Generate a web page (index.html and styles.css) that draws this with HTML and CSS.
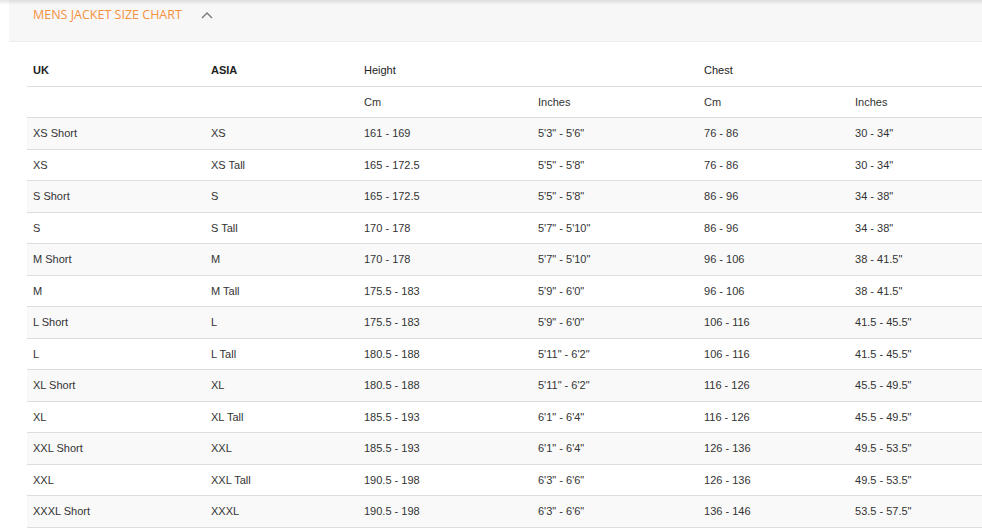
FILE: index.html
```html
<!DOCTYPE html>
<html>
<head>
<meta charset="utf-8">
<link rel="stylesheet" href="styles.css">
</head>
<body>
<div class="topshade"></div>
<div class="panel">
  <div class="panel-head">
    <span class="panel-title">MENS JACKET SIZE CHART</span>
    <svg class="chev" width="12" height="8" viewBox="0 0 12 8"><path d="M1 7 L6 2 L11 7" fill="none" stroke="#777" stroke-width="1.3"/></svg>
  </div>
  <div class="panel-body">
    <table class="chart">
      <colgroup>
        <col style="width:178px"><col style="width:153px"><col style="width:174px"><col style="width:166px"><col style="width:151px"><col>
      </colgroup>
      <thead>
        <tr class="h1"><th class="b">UK</th><th class="b">ASIA</th><th colspan="2">Height</th><th colspan="2">Chest</th></tr>
        <tr class="h2"><td></td><td></td><td>Cm</td><td>Inches</td><td>Cm</td><td>Inches</td></tr>
      </thead>
      <tbody>
        <tr><td>XS Short</td><td>XS</td><td>161 - 169</td><td>5'3" - 5'6"</td><td>76 - 86</td><td>30 - 34"</td></tr>
        <tr><td>XS</td><td>XS Tall</td><td>165 - 172.5</td><td>5'5" - 5'8"</td><td>76 - 86</td><td>30 - 34"</td></tr>
        <tr><td>S Short</td><td>S</td><td>165 - 172.5</td><td>5'5" - 5'8"</td><td>86 - 96</td><td>34 - 38"</td></tr>
        <tr><td>S</td><td>S Tall</td><td>170 - 178</td><td>5'7" - 5'10"</td><td>86 - 96</td><td>34 - 38"</td></tr>
        <tr><td>M Short</td><td>M</td><td>170 - 178</td><td>5'7" - 5'10"</td><td>96 - 106</td><td>38 - 41.5"</td></tr>
        <tr><td>M</td><td>M Tall</td><td>175.5 - 183</td><td>5'9" - 6'0"</td><td>96 - 106</td><td>38 - 41.5"</td></tr>
        <tr><td>L Short</td><td>L</td><td>175.5 - 183</td><td>5'9" - 6'0"</td><td>106 - 116</td><td>41.5 - 45.5"</td></tr>
        <tr><td>L</td><td>L Tall</td><td>180.5 - 188</td><td>5'11" - 6'2"</td><td>106 - 116</td><td>41.5 - 45.5"</td></tr>
        <tr><td>XL Short</td><td>XL</td><td>180.5 - 188</td><td>5'11" - 6'2"</td><td>116 - 126</td><td>45.5 - 49.5"</td></tr>
        <tr><td>XL</td><td>XL Tall</td><td>185.5 - 193</td><td>6'1" - 6'4"</td><td>116 - 126</td><td>45.5 - 49.5"</td></tr>
        <tr><td>XXL Short</td><td>XXL</td><td>185.5 - 193</td><td>6'1" - 6'4"</td><td>126 - 136</td><td>49.5 - 53.5"</td></tr>
        <tr><td>XXL</td><td>XXL Tall</td><td>190.5 - 198</td><td>6'3" - 6'6"</td><td>126 - 136</td><td>49.5 - 53.5"</td></tr>
        <tr><td>XXXL Short</td><td>XXXL</td><td>190.5 - 198</td><td>6'3" - 6'6"</td><td>136 - 146</td><td>53.5 - 57.5"</td></tr>
      </tbody>
    </table>
  </div>
</div>
</body>
</html>
```
FILE: styles.css
```css
html, body {
  margin: 0;
  padding: 0;
  background: #fff;
}
body {
  position: relative;
  font-family: "Liberation Sans", Arial, sans-serif;
  color: #333;
  overflow: hidden;
}
.topshade {
  position: absolute;
  left: 0;
  right: 0;
  top: 0;
  height: 5px;
  background: linear-gradient(to bottom, rgba(0,0,0,0.10), rgba(0,0,0,0));
  pointer-events: none;
  z-index: 2;
}
.panel {
  margin-left: 9px;
}
.panel-head {
  height: 42px;
  background: #f7f7f7;
  border-bottom: 1px solid #ededed;
  box-sizing: border-box;
  display: flex;
  align-items: flex-start;
  padding: 7px 0 0 24px;
}
.panel-title {
  font-family: "Open Sans", sans-serif;
  font-size: 12.5px;
  color: #f5913e;
  line-height: 16px;
}
.chev {
  margin: 4px 0 0 19px;
}
.panel-body {
  padding: 13px 0 0 18px;
}
.chart {
  width: 955px;
  border-collapse: collapse;
  table-layout: fixed;
  font-size: 11px;
}
.chart th, .chart td {
  text-align: left;
  padding: 8px 6px;
  line-height: 14.5px;
  height: 14.5px;
  box-sizing: content-box;
  white-space: nowrap;
}
.chart th {
  font-weight: normal;
  color: #222;
}
.chart th.b {
  font-weight: bold;
}
.chart tr.h2 td {
  border-top: 1px solid #ddd;
  color: #333;
}
.chart tbody td {
  border-top: 1px solid #ddd;
}
.chart tbody tr:last-child td {
  border-bottom: 1px solid #ddd;
}
.chart tbody tr:nth-child(odd) {
  background: #f9f9f9;
}
```
